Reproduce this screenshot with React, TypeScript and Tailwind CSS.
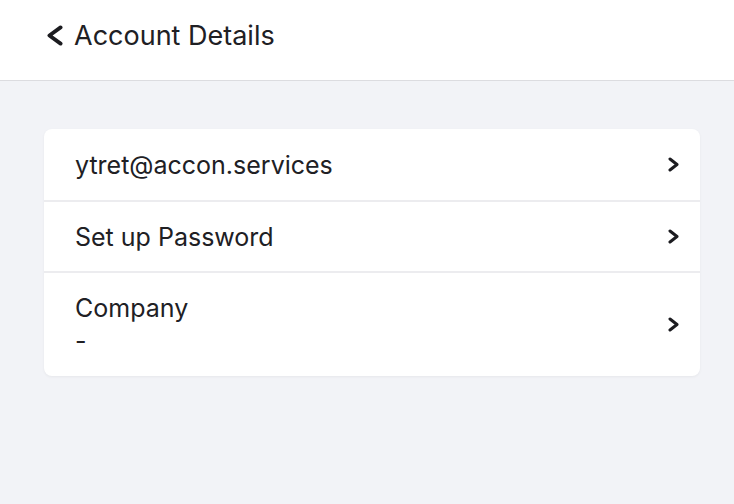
const rows = [
  { title: "ytret@accon.services" },
  { title: "Set up Password" },
  { title: "Company", sub: "-" },
];

function Chevron({ w, h, sw, left }: { w: number; h: number; sw: number; left?: boolean }) {
  const p = sw / 2 + 0.5;
  const d = left
    ? `M${w - p} ${p} L${p} ${h / 2} L${w - p} ${h - p}`
    : `M${p} ${p} L${w - p} ${h / 2} L${p} ${h - p}`;
  return (
    <svg width={w} height={h} viewBox={`0 0 ${w} ${h}`} fill="none">
      <path d={d} stroke="#1c1c20" strokeWidth={sw} strokeLinecap="round" strokeLinejoin="round" />
    </svg>
  );
}

export default function App() {
  return (
    <div
      className="min-h-[504px] w-[734px] bg-[#f2f3f7] text-[#202024]"
      style={{ fontFamily: "Inter, 'Noto Sans', sans-serif" }}
    >
      {/* header */}
      <div className="h-[81px] bg-white border-b border-[#dcdce0] flex items-center pb-[9px] pl-[47px]">
        <Chevron w={16} h={21} sw={3.8} left />
        <span className="ml-[11px] text-[27px] leading-[36px]">Account Details</span>
      </div>

      {/* card */}
      <div className="ml-[44px] mr-[34px] mt-[48px] bg-white rounded-[8px] shadow-[0_1px_3px_rgba(0,0,0,0.05)]">
        {rows.map((r, i) => (
          <div
            key={r.title}
            className={
              "flex items-center pl-[31px] pr-[21px] " +
              (i > 0 ? "border-t-2 border-[#ececef] " : "") +
              (r.sub ? "h-[105px]" : "h-[71px]")
            }
          >
            <div className="flex-1">
              <div className="text-[25px] leading-[34px]">{r.title}</div>
              {r.sub && <div className="text-[25px] leading-[34px] -mt-[1px]">{r.sub}</div>}
            </div>
            <Chevron w={11} h={15} sw={3} />
          </div>
        ))}
      </div>
    </div>
  );
}
